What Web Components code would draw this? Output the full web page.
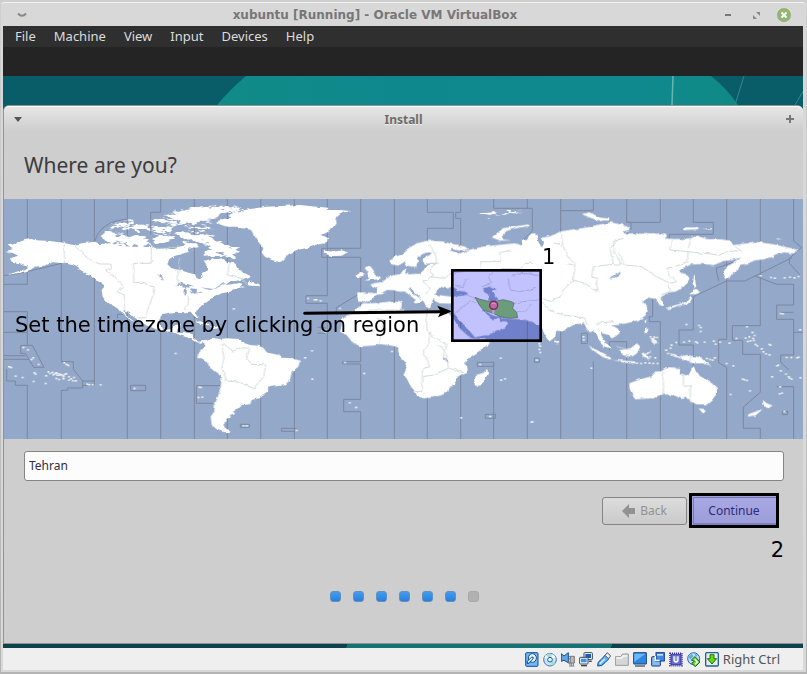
<!DOCTYPE html>
<html lang="en">
<head>
<meta charset="utf-8">
<title>xubuntu [Running] - Oracle VM VirtualBox</title>
<style>
html, body { margin: 0; min-height: 100%; background: #bdbdbd; }
</style>
</head>
<body>
<vm-window></vm-window>

<script>
const define = (name, html, setup) => {
  const template = document.createElement('template');
  template.innerHTML = '<style>:host,*{box-sizing:border-box}button{font:inherit;color:inherit;background:none;border:0;padding:0;margin:0}svg{display:block}</style>' + html;
  customElements.define(name, class extends HTMLElement {
    connectedCallback() {
      if (this.shadowRoot) return;
      this.attachShadow({ mode: 'open' }).append(template.content.cloneNode(true));
      if (setup) setup(this, this.shadowRoot);
    }
  });
};

define('vm-titlebar', `
<style>
:host { display: grid; grid-template-columns: 27px 1fr 80px; align-items: center; height: 22px; padding: 0 12px 0 9px; color: #777; font: bold 12px "DejaVu Sans", sans-serif; }
h1 { margin: 0; font: inherit; text-align: center; white-space: nowrap; }
div { display: flex; justify-content: flex-end; align-items: center; gap: 14px; }
button { display: block; }
</style>
<button aria-label="Window menu"><svg width="20" height="14"><path d="M6 5.500Q10 10 14 5.500" fill="none" stroke="#888" stroke-width="2"/></svg></button>
<h1><slot></slot></h1>
<div>
<button aria-label="Minimize"><svg width="14" height="14"><path d="M4 7h6" stroke="#777" stroke-width="2"/></svg></button>
<button aria-label="Maximize"><svg width="14" height="14"><path d="M7 4h4v4zM4 7v4h4z" fill="#888"/></svg></button>
<button aria-label="Close"><svg width="14" height="14"><circle cx="7" cy="7" r="7" fill="#93b572"/><path d="M4.500 4.500l5 5m0-5l-5 5" stroke="#fff" stroke-width="2"/></svg></button>
</div>`);

define('vm-menubar', `
<style>
:host { display: block; background: #2f2f2f; color: #dcdcdc; font: 13px/21px "Noto Sans", sans-serif; }
nav { display: flex; gap: 18px; padding: 0 12px; height: 21px; }
</style>
<nav aria-label="Machine menu"><button>File</button><button>Machine</button><button>View</button><button>Input</button><button>Devices</button><button>Help</button></nav>`);

define('desktop-wallpaper', `
<style>
:host { display: block; height: 29px; overflow: hidden; background: #095d68; }
svg { width: 100%; height: 100%; }
</style>
<svg viewBox="0 0 800 30" preserveAspectRatio="none">
<defs><linearGradient id="g"><stop offset="0" stop-color="#118b87"/><stop offset=".35" stop-color="#0e888d"/><stop offset=".8" stop-color="#0f898e"/><stop offset="1" stop-color="#108985"/></linearGradient></defs>
<path d="M214 30Q228 13 243 0H708Q724 13 735 30Z" fill="url(#g)"/>
<path d="M670 0L669 30" stroke="#66b5b5" stroke-width="1.500"/><path d="M741 0L732 30M800 16L792 30" stroke="#398790"/>
</svg>`);

define('install-titlebar', `
<style>
:host { display: grid; grid-template-columns: 20px 1fr 20px; align-items: center; height: 25px; padding: 0 3px; border-top: 1px solid #fff; border-radius: 5px 5px 0 0; background: linear-gradient(#e6e6e6, #cecece); color: #6b6b6b; font: bold 12px "Noto Sans", sans-serif; text-shadow: 0 1px #eee; }
h2 { margin: 0; font: inherit; text-align: center; }
</style>
<button aria-label="Window menu"><svg width="20" height="12"><path d="M7 4h8l-4 5z" fill="#555"/></svg></button>
<h2><slot></slot></h2>
<button aria-label="Maximize"><svg width="20" height="12"><path d="M10 2v8M6 6h8" stroke="#777" stroke-width="2"/></svg></button>`);

/* Coordinates are in thirds of a pixel; each group starts at its own longitude. */
define('timezone-map', `
<style>
:host { display: block; position: relative; color: #000; font: 21px/26px "DejaVu Sans", sans-serif; }
svg { width: 100%; height: auto; }
span { position: absolute; white-space: nowrap; }
.hint { left: 11px; top: 113px; }
.step { left: 538px; top: 45px; }
</style>
<svg viewBox="12 12 2397 720" role="img" aria-label="World timezone map">
<defs>
<filter id="coast" x="0" y="0" width="2420" height="740" filterUnits="userSpaceOnUse"><feTurbulence type="fractalNoise" baseFrequency=".055" numOctaves="3" seed="4"/><feDisplacementMap in="SourceGraphic" scale="10" xChannelSelector="R" yChannelSelector="G"/></filter>
<filter id="rugged" x="0" y="0" width="2420" height="740" filterUnits="userSpaceOnUse"><feTurbulence type="fractalNoise" baseFrequency=".035 .09" numOctaves="3" seed="9"/><feDisplacementMap in="SourceGraphic" scale="34" xChannelSelector="R" yChannelSelector="G"/></filter>
</defs>
<rect width="2420" height="740" fill="#94a8ca"/>
<g id="zones" fill="none" stroke="#7b88a0" stroke-width="3">
<path d="M82 12V268H12M82 350V412H12M82 350H12M12 482H76M82 412V452M82 571V732M184 12V500M184 586V732M283 12V571M382 12V732M482 12V52H452V118M482 380V732M583 12V732M682 12V732M782 12V732M883 12V732M982 12V302H918V325H982V732M1082 12V160H965V187H1082V500H1028V507H1082V613H1031V650H1082V732M1183 12V732M1282 12V52H1360V100H1282V732M1382 12V52H1367V70H1382V732M1481 12V40H1597V108L1565 140M1481 500V732M1582 12V40M1582 380V732M1682 12V732M1780 12V47H1682M1780 500V732M1880 12V82H1893V105M1880 82H1981V12M1880 732V440H1828V465M1981 732V380H1948V365H1958V308M2080 12V82H2140V118H2008V135M2080 732V450H2037V405H2080V305L2180 258H2235L2376 188M2180 12V433H2156V503L2180 518V732M2281 12V392H2197V436H2228V478H2281V592L2230 636V700H2281V732M2381 12V138L2405 157L2368 190V205L2400 240M2381 732V575H2330M2381 330V268H2330L2262 242M2381 330H2330V373H2381V480H2342V502L2367 525M2381 412H2409"/>
<path d="M62 451H97L132 517H101L76 475H62ZM12 493H87M20 522V558H46V571H82M184 500H220V523L248 558V579H203V586H184M248 571H283M248 558H283M392 571H437V587H392ZM589 572V625H640M589 572H660M721 688H748V697H721ZM890 700H844V709H885M285 138Q300 80 382 72M12 242Q90 230 184 205M1009 360V338L1080 295M352 370V358H370M952 397H975V415H952M1432 502H1481V514H1432ZM1456 658H1486V670H1456ZM1603 489H1618V502H1603ZM1744 415H1762V445H1744ZM2347 649H2363V659H2347ZM2340 352H2380M2156 258L2148 220L2200 202"/>
</g>
<g fill="#fff">
<g filter="url(#coast)">
<path d="M18 168 40 162 28 158 20 150 45 148 50 143 62 138 90 132 110 136 150 138 190 143 220 150 245 145 285 140 300 147 330 145 360 152 400 155 450 156 470 163 500 160 520 163 545 155 565 160 563 170 545 178 525 182 508 192 502 208 515 220 540 225 570 235 585 238 590 250 600 253 608 245 605 235 622 225 620 210 612 198 640 190 655 195 670 192 690 203 702 205 712 218 730 232 755 245 740 252 720 255 690 262 675 270 700 267 725 264 720 275 740 272 705 282 690 290 665 295 645 305 625 315 612 325 605 332 590 345 588 355 598 368 592 372 578 358 572 350 555 352 530 350 505 353 485 358 478 375 480 395 495 405 515 402 525 390 540 388 532 402 530 410 555 412 578 418 580 432 600 440 620 435 625 440 600 446 585 440 570 430 545 422 520 412 500 408 475 405 450 395 430 388 415 375 400 365 385 350 370 345 375 360 390 370 404 382 390 375 370 358 355 340 335 330 320 320 308 305 305 285 315 272 300 262 285 255 270 240 255 232 235 215 220 208 200 203 185 204 160 202 150 205 130 212 105 215 90 225 60 233 22 240 50 230 75 223 85 215 65 210 60 205 35 200 30 190 55 182 40 175Z"/>
<path d="M738 270 750 255 758 260 778 268 780 274 757 272ZM585 381 600 379 630 388 625 391 600 386ZM630 394 650 392 660 399 640 402Z"/>
<g transform="translate(600)">
<path d="M48 80 70 72 95 68 85 60 110 50 150 42 200 35 260 32 300 30 350 35 385 38 380 45 420 45 450 48 420 55 405 70 410 85 400 100 385 110 365 120 385 130 375 145 345 150 325 158 290 165 265 178 250 195 240 202 215 195 195 185 182 170 190 160 178 145 165 125 160 110 140 98 110 95 80 95 50 85ZM370 175 375 167 400 170 430 166 440 173 425 182 395 183Z"/>
<path d="M12 438 35 428 60 432 80 430 120 432 125 442 150 450 175 452 190 458 200 472 235 480 245 488 280 490 300 498 295 515 275 530 270 555 258 568 235 570 210 573 200 590 175 610 155 615 150 628 125 630 120 638 100 645 105 655 90 660 92 668 75 672 80 682 70 688 75 700 92 710 75 712 50 703 35 690 32 665 42 650 45 630 55 600 62 575 65 545 45 530 30 518 20 500 5 490-8 490-5 475 5 465 15 455Z"/>
<path d="M497 215 510 213 520 225 525 240 542 245 540 252 498 257 510 248 500 240 505 230 495 222ZM466 243 485 230 492 235 490 247 470 250Z"/>
</g>
<g transform="translate(1200)">
<path d="M-128 292-95 293-70 295-68 280-90 270-80 265-60 262-40 250-20 240 0 238 10 225 20 222 15 235 30 238 60 235 65 215 35 215 22 212 15 200-5 212-25 208-33 195-25 190 0 180 25 160 50 145 75 138 100 137 130 140 150 145 195 155 205 163 180 167 155 162 150 167 165 173 180 175 200 167 225 160 260 153 290 150 320 147 345 145 367 152 365 137 385 135 385 125 395 115 410 120 415 140 425 158 432 145 425 128 445 125 460 120 480 110 520 103 560 98 590 90 631 82 661 88 691 98 686 105 666 110 671 116 711 115 751 118 781 115 801 122 795 131 841 132 871 130 891 122 921 132 961 133 991 137 1000 150 1041 145 1061 140 1101 145 1121 148 1151 155 1196 165 1181 175 1151 172 1126 178 1116 190 1071 195 1041 205 1021 210 1016 220 996 238 976 252 969 240 971 225 986 210 1011 195 1021 188 996 195 971 198 941 210 911 207 876 208 846 220 836 230 866 240 869 250 861 265 846 280 826 290 806 292 796 298 781 308 791 320 791 330 779 330 773 320 766 312 746 308 736 315 726 322 741 335 743 350 736 362 716 375 691 382 666 388 651 390 636 391 656 402 659 415 646 425 636 430 626 422 611 415 603 412 605 425 616 440 629 455 631 462 621 460 605 448 595 430 588 412 578 408 570 412 560 400 552 385 530 387 510 395 490 405 468 412 466 425 450 438 440 430 430 410 425 390 410 388 395 380 380 375 345 372 320 370 295 365 280 362 250 345 245 347 270 365 278 376 295 370 302 378 320 380 325 388 310 402 260 420 225 427 215 415 190 390 165 358 155 352 158 325 150 326 120 325 105 318 100 310 95 325 90 337 80 335 70 318 45 290 35 280 25 285 60 310 70 316 50 325 40 322 48 315 15 290 0 290-20 285-40 285-60 297-72 300-90 318-105 322-125 320-128 305Z"/>
<path d="M-110 325-85 325-30 320 5 322 5 335 0 345 30 352 60 348 90 350 120 353 145 355 155 362 175 395 195 415 215 430 245 432 275 436 265 450 235 470 205 490 192 505 202 515 203 530 170 545 168 555 165 570 150 575 145 590 125 600 100 607 60 611 52 605 45 590 30 570 20 550 10 540 20 520 15 500 0 485-5 470-5 458-15 454-35 450-60 447-80 452-120 454-145 440-160 420-180 410-175 395-175 375-160 362-135 350-130 338Z"/>
<path d="M265 522 267 533 255 550 245 570 230 573 222 560 228 540 245 535ZM463 437 475 440 472 447 463 445ZM275 127 290 115 310 100 340 95 388 88 388 93 345 100 320 108 305 122 310 133 335 137 300 137ZM545 57 570 52 600 68 627 71 625 77 590 75 570 68Z"/>
</g>
<g transform="translate(1791)">
<path d="M-27 450 0 465 30 480 45 492 35 493 15 485-10 467ZM45 495 80 497 115 500 115 505 80 503ZM70 465 100 460 120 445 130 455 120 475 105 485 75 480ZM133 475 165 470 150 478 157 492 143 490ZM215 475 235 478 245 485 270 480 310 487 325 500 345 512 315 505 290 505 270 500 250 490 230 483Z"/>
<path d="M97 565 110 560 140 550 160 545 175 530 195 528 205 520 220 520 250 522 248 535 265 540 275 540 285 520 290 513 297 530 305 540 320 550 345 565 360 580 360 595 345 615 330 628 300 628 280 620 265 605 255 612 240 605 215 598 190 600 160 610 115 613 105 600 98 580ZM305 640 327 643 318 655ZM497 615 510 625 527 632 510 642 502 635ZM498 642 475 662 452 665 455 657 480 648Z"/>
<path d="M290 283 310 290 295 298 280 297ZM283 300 285 315 270 328 245 332 215 342 205 340 230 332 255 325 270 318ZM288 237 295 255 298 275 290 280 286 260ZM143 400 155 402 150 415 142 413ZM160 425 182 440 170 447ZM142 378 150 373 145 385ZM255 97 300 97 305 103 260 105ZM315 101 345 100 343 104ZM535 131 555 131 545 134ZM0 70 40 72 10 78Z"/>
</g>
</g>
<g filter="url(#rugged)">
<path d="M300 130 315 112 345 108 340 120 370 118 385 128 360 130 410 122 440 130 435 145 455 152 430 155 380 148 340 142ZM325 98 350 85 400 75 400 80 370 90 345 98ZM360 103 385 92 440 88 445 105 415 105ZM450 102 475 92 520 95 510 112 470 110ZM455 130 480 120 510 118 515 132 495 142 470 145ZM525 122 545 112 600 115 628 120 650 135 680 150 720 160 700 175 705 190 685 185 660 178 630 185 610 175 625 165 630 150 600 140 560 132ZM490 65 530 50 570 40 630 35 660 35 720 38 725 45 690 48 660 60 640 75 600 80 560 85 520 75ZM450 75 480 68 520 82 550 90 520 92ZM555 98 580 92 620 95 650 102 600 106ZM550 145 580 145 600 155 590 165 560 158Z"/>
<path d="M1437 55 1480 52 1500 58 1470 62ZM1500 52 1565 50 1530 57ZM220 210 245 215 265 230 270 242 245 225Z"/>
</g>
</g>
<g fill="#94a8ca" filter="url(#coast)">
<path d="M525 272 545 264 565 268 580 273 565 278 545 273ZM551 283 558 278 556 302 550 300ZM572 280 590 283 585 298 575 290ZM588 292 610 290 605 294ZM473 237 485 243 492 258 482 250ZM600 277 640 282 670 265 678 265 650 280 630 285Z" />
<g transform="translate(1200)"><path d="M48 188 72 175 98 170 90 180 75 187 67 197 75 206 120 204 95 209 78 210 72 225 60 235 48 235 55 220 48 208 58 198ZM105 298 112 285 122 275 140 280 155 275 175 287 195 290 207 297 190 302 155 305 130 302ZM248 280 270 274 288 280 275 288 283 300 297 314 285 322 265 315 265 298 250 290ZM135 487 142 495 138 505ZM130 485 136 492 130 498Z"/></g>
<path d="M1825 250 1845 243 1860 230 1862 236 1848 248 1830 253Z"/>
</g>
<g id="isles" fill="#e9eeee"></g>
<g fill="none" stroke="#cbd3d1" stroke-width="2.500" filter="url(#coast)">
<path d="M193 143V205M222 150 245 175 280 200 300 207H333V220L317 225 345 245 370 275 350 290 373 300V345M454 156V205H401V263H435L442 272 462 275 455 315 440 350V368H415M538 190V228L530 250 538 268 555 275M565 300V325L555 345M545 155 495 160H455"/>
<path d="M687 205 682 240 720 250 740 265M665 443 700 468 725 458 748 460 740 490 755 508 797 510 790 550 775 560 765 582 720 562 680 558 665 515 672 490 665 443M1090 355 1110 345 1200 345M1200 335 1205 355M1130 370 1150 375 1145 415 1135 445M1100 395 1120 415"/>
<g transform="translate(1200)"><path d="M88 148 105 175 110 200 90 230 100 240 80 255 68 258 90 280 80 300M90 245 135 250 150 235 190 230M243 220V200H300V175L330 165M300 220 360 222 375 205 400 205M460 140 490 155 500 180 525 205 520 255 555 265 590 290V250L575 245 580 215 640 208 630 160 660 130M480 110 490 150M500 205 520 210M427 310 450 320 480 305 490 285 520 255M425 320 450 345 490 360 530 365 555 370 560 390M335 240 375 235 420 242M325 250 330 285 360 290 410 280M280 232 265 245 275 265 245 275M165 270 190 275 200 250M160 358 210 320 225 320M340 325 370 320 415 315M350 350 375 350 395 330M225 310 200 300M80 350V410L140 450M90 410 85 450 70 470 90 515 68 520 65 590 45 590M110 450 125 455 140 480 145 520 190 530M70 545 100 540 145 520M140 450 130 485"/></g>
<path d="M1840 210 1865 210 1845 175 1840 140 1870 130M1855 175 1875 210 1925 215 1970 245 2010 265 2030 260 2010 240 2000 220 2060 205 2065 170 2010 165 2015 132M2065 170 2160 180 2190 165 2225 170 2200 150M2075 125 2065 160M1981 300 2010 290 2005 270M1790 385 1840 380M1990 530V600M2050 535V573H2071V625M2071 480V505M1850 455 1890 465"/>
</g>
<path d="M1425 307 1440 313 1462 318 1490 318 1510 314 1535 320 1542 325 1538 340 1550 352 1553 368 1530 370 1500 365 1480 355 1450 345 1438 330Z" fill="#8cce7d" stroke="#677b69" stroke-width="2"/>
<rect x="1357" y="226" width="265" height="211" fill="#c2c2ff" stroke="#000" stroke-width="8" style="mix-blend-mode:multiply"/>
<path d="M1480 342V356" stroke="#aaa8c9" stroke-width="7"/><circle cx="1481" cy="331" r="12" fill="#bd68a7" stroke="#901e64" stroke-width="4"/><path d="M1475 327Q1480 322 1487 327" stroke="#dba4cc" stroke-width="3" fill="none"/>
<path d="M914 355 1320 350" stroke="#000" stroke-width="9" stroke-linecap="round"/><path d="M1312 332 1356 349 1314 367 1322 350Z"/>
</svg>
<span class="hint">Set the timezone by clicking on region</span>
<span class="step">1</span>`, (host, root) => {
  const spots = [70,457,84,464,100,488,94,493,116,508,28,515,33,517,47,543,68,547,103,533,107,537,101,559,138,542,145,530,150,535,157,532,160,539,165,536,168,533,171,540,173,535,177,540,180,537,184,539,188,541,191,545,194,538,198,536,169,550,177,553,190,551,207,545,207,555,213,551,222,547,219,557,227,557,137,565,193,503,199,508,205,511,262,567,267,569,278,569,302,569,403,580,598,576,603,577,595,607,607,606,527,475,701,341,924,310,944,314,949,314,962,317,968,405,974,410,979,406,936,467,915,488,937,552,1035,502,1092,535,1020,340,1049,623,1068,637,1176,469,731,692,740,692,890,706,1384,668,1470,664,1594,681,1598,680,1610,495,1440,508,1502,489,1503,555,1515,551,1618,446,1620,453,1618,463,1621,472,1750,425,1751,434,1774,519,
  2059,388,2068,438,2052,441,2087,440,2092,443,2097,391,2102,397,2102,409,2029,442,2014,450,2012,459,2114,441,2141,438,2147,447,2160,441,2188,444,2209,430,2237,429,2243,439,2248,425,2252,437,2259,430,2264,421,2262,436,2266,448,2272,452,2241,395,2257,412,2308,448,2312,450,2285,461,2290,470,2298,476,2308,479,2192,598,2250,587,2228,552,2234,554,2241,556,2316,545,2331,512,2335,510,2342,527,2360,487,2374,487,2391,488,2396,486,2358,537,2366,545,2375,552,2369,549,2401,548,2346,594,2339,596,2400,404,2353,649,2342,355,2348,356,2282,242,2313,247,2324,249,2354,248,2370,246,2383,248,2396,244,1952,425,1955,431,1962,440,1967,443,1958,439,1971,427,1963,426,1998,465,2004,475,2015,480,2025,482,1950,485,1966,488,1910,504,1923,505,1936,503,1948,504,1960,505,1973,505,2120,490,2130,493,2138,495,2144,488,2180,505,2200,512,2340,575];
  const ns = 'http://www.w3.org/2000/svg', group = root.getElementById('isles');
  for (let i = 0; i < spots.length; i += 2) {
    const spot = document.createElementNS(ns, 'rect');
    spot.setAttribute('x', spots[i] - 3); spot.setAttribute('y', spots[i + 1] - 2);
    spot.setAttribute('width', i % 3 ? 6 : 7); spot.setAttribute('height', 5);
    group.append(spot);
  }
});

define('step-dots', `
<style>
:host { display: flex; justify-content: center; gap: 12px; }
i { width: 11px; height: 11px; border-radius: 3px; background: linear-gradient(#459bee, #2a7fdc); border: 1px solid #5f91c2; }
i.next { background: #b1b1b1; border-color: #a8a8a8; }
</style>
<i></i><i></i><i></i><i></i><i></i><i></i><i class="next"></i>`);

define('install-form', `
<style>
:host { display: flex; flex-direction: column; padding: 12px 19px 0 20px; font: 12px "Noto Sans", sans-serif; color: #2f2f3c; }
input { width: 100%; height: 30px; padding: 0 4px 1px; border: 1px solid #858585; border-radius: 3px; background: #fcfcfc; font: inherit; color: inherit; }
.actions { display: flex; justify-content: flex-end; align-items: center; gap: 2px; padding: 12px 5px 0 0; }
.back { display: flex; align-items: center; justify-content: center; gap: 4px; width: 85px; height: 28px; border: 1px solid #858585; border-radius: 3px; background: linear-gradient(#dcdcdc, #cacaca); color: #929292; }
.next { width: 90px; height: 35px; border: 3px solid #000; background: linear-gradient(#a9a9e5, #9c9cd9); color: #302c76; box-shadow: inset 1px 1px #a4a4dd, inset 2px 2px #7777b8, inset 0 -2px #8080bf; }
.step { align-self: flex-end; margin-top: 9px; color: #000; font: 21px/26px "DejaVu Sans", sans-serif; }
step-dots { margin-top: 28px; }
</style>
<input type="text" value="Tehran" aria-label="Location">
<div class="actions">
<button class="back" disabled><svg width="14" height="14"><path d="M0 7 7 0V4H13V10H7V14Z" fill="#929292"/></svg>Back</button>
<button class="next">Continue</button>
</div>
<span class="step">2</span>
<step-dots></step-dots>`);

define('install-window', `
<style>
:host { display: flex; flex-direction: column; flex: 1; background: #cecece; border: 1px solid #929292; border-width: 1px 0 1px 1px; border-radius: 6px 6px 0 0; }
h3 { margin: 0; padding: 20px 20px 19px; font: 21px/29px "Noto Sans", sans-serif; color: #3c3c3c; }
</style>
<install-titlebar>Install</install-titlebar>
<h3>Where are you?</h3>
<timezone-map></timezone-map>
<install-form></install-form>`);

define('vm-statusbar', `
<style>
:host { display: flex; align-items: center; justify-content: flex-end; gap: 4px; height: 22px; padding-right: 23px; background: #efefef; color: #555; font: 13px "Noto Sans", sans-serif; }
svg { width: 14px; height: 15px; flex: none; }
span { white-space: nowrap; }
</style>
<svg viewBox="0 0 42 45"><rect x="2" y="2" width="37" height="41" rx="3" fill="#70b8f5" stroke="#124f9e" stroke-width="3"/><ellipse cx="22" cy="18" rx="12" ry="13" fill="#eef8ff" stroke="#124f9e" stroke-width="3"/><path d="M22 18 9 31" stroke="#124f9e" stroke-width="9" stroke-linecap="round"/><path d="M21 19 10 30" stroke="#fff" stroke-width="4" stroke-linecap="round"/></svg>
<svg viewBox="0 0 42 45"><circle cx="21" cy="23" r="19" fill="#c5e4fa" stroke="#4277b8" stroke-width="3"/><path d="M21 23 10 6 23 4ZM21 23 38 32 27 41Z" fill="#a0dfc8"/><path d="M21 23 4 17 8 9ZM21 23 30 6 38 16Z" fill="#f1faff"/><circle cx="21" cy="23" r="7" fill="#e8f5ff" stroke="#23599f" stroke-width="3"/></svg>
<svg viewBox="0 0 42 45"><path d="M1 5 9 12 22 2V32L9 25 1 28Z" fill="#61a5e6" stroke="#174f97" stroke-width="3"/><path d="M26 12Q31 17 26 22" fill="none" stroke="#174f97" stroke-width="3"/><path d="M28 13h12v20H28zM31 33v8M37 33v8M24 42h16M24 27v9h5" fill="#bbb" stroke="#777" stroke-width="3"/></svg>
<svg viewBox="0 0 42 45"><rect x="15" y="2" width="25" height="21" rx="2" fill="#fff" stroke="#394452" stroke-width="3"/><rect x="19" y="6" width="17" height="12" fill="#155ec0"/><path d="M30 28h8" stroke="#444" stroke-width="4"/><rect x="2" y="16" width="25" height="20" rx="2" fill="#fff" stroke="#394452" stroke-width="3"/><rect x="6" y="20" width="17" height="11" fill="#3f92e8"/><path d="M6 41h18" stroke="#444" stroke-width="4"/></svg>
<svg viewBox="0 0 42 45"><path d="M2 42Q0 29 13 22L25 9 36 20 24 32Q15 44 2 42Z" fill="#65b3f4" stroke="#0e4998" stroke-width="3"/><path d="M24 10 31 2 41 12 34 20Z" fill="#eee" stroke="#555" stroke-width="3"/><path d="M8 36 23 21" stroke="#d6f1ff" stroke-width="4"/></svg>
<svg viewBox="0 0 42 45"><path d="M1 40V14H17L23 6H40V40Z" fill="#d6d6d6" stroke="#999" stroke-width="3"/><path d="M4 18H20L25 12H37" fill="none" stroke="#f7f7f7" stroke-width="4"/></svg>
<svg viewBox="0 0 42 45"><rect x="1" y="2" width="40" height="34" rx="2" fill="#2f86e1" stroke="#1b4475" stroke-width="3"/><path d="M4 5H37L4 30Z" fill="#69b8ff"/><path d="M6 42h30" stroke="#6b7480" stroke-width="5"/></svg>
<svg viewBox="0 0 42 45"><rect x="2" y="14" width="26" height="28" rx="2" fill="#84bff4" stroke="#173a88" stroke-width="3"/><rect x="15" y="2" width="25" height="25" fill="#438adf" stroke="#173a88" stroke-width="3"/><path d="M13 12V25H26" fill="none" stroke="#fff" stroke-width="4"/><path d="M18 6h18v5H18z" fill="#bee0fb"/></svg>
<svg viewBox="0 0 42 45"><rect x="3" y="4" width="36" height="37" fill="none" stroke="#3838a0" stroke-width="5" stroke-dasharray="3 3"/><rect x="6" y="7" width="30" height="31" fill="#6669cc" stroke="#3a3aa5" stroke-width="3"/><path d="M15 13V23Q15 30 21 30T27 23V13" fill="#8ba1e7" stroke="#fff" stroke-width="4"/></svg>
<svg viewBox="0 0 42 45"><circle cx="20" cy="20" r="18" fill="#b9dffa" stroke="#286aa8" stroke-width="3"/><path d="M4 16 14 5 19 13 10 22ZM23 4 32 9 26 16Z" fill="#5eaadf"/><path d="M13 24 24 14 39 30 25 44 14 34 22 28Z" fill="#6dce35" stroke="#246724" stroke-width="3"/><path d="M23 22 31 30 24 37" fill="none" stroke="#fff" stroke-width="4"/></svg>
<svg viewBox="0 0 42 45"><rect x="2" y="2" width="38" height="40" rx="3" fill="#e4efeb" stroke="#275d98" stroke-width="4"/><path d="M15 8H27V20H35L21 36 7 20H15Z" fill="#62d719" stroke="#257415" stroke-width="3"/></svg>
<span>Right Ctrl</span>`);

define('vm-window', `
<style>
:host { display: flex; flex-direction: column; min-height: 100vh; padding: 2px 1px 2px; background: linear-gradient(#cfcfcf, #b4b4b4); }
.frame { display: flex; flex: 1; flex-direction: column; padding: 1px 3px 2px 2px; border-top: 1px solid #f1f1f1; border-radius: 4px 4px 0 0; background: #d8d8d8; }
.screen { display: flex; flex: 1; flex-direction: column; background: #095d68; }
.panel { height: 29px; background: #242424; }
.dock { height: 4px; background: linear-gradient(110deg, #0d414c 43%, #167375 43%, #167375 76%, #0d414c 76%); }
</style>
<div class="frame">
<vm-titlebar>xubuntu [Running] - Oracle VM VirtualBox</vm-titlebar>
<vm-menubar></vm-menubar>
<div class="screen"><div class="panel"></div><desktop-wallpaper></desktop-wallpaper><install-window></install-window><div class="dock"></div></div>
<vm-statusbar></vm-statusbar>
</div>`);
</script>
</body>
</html>
